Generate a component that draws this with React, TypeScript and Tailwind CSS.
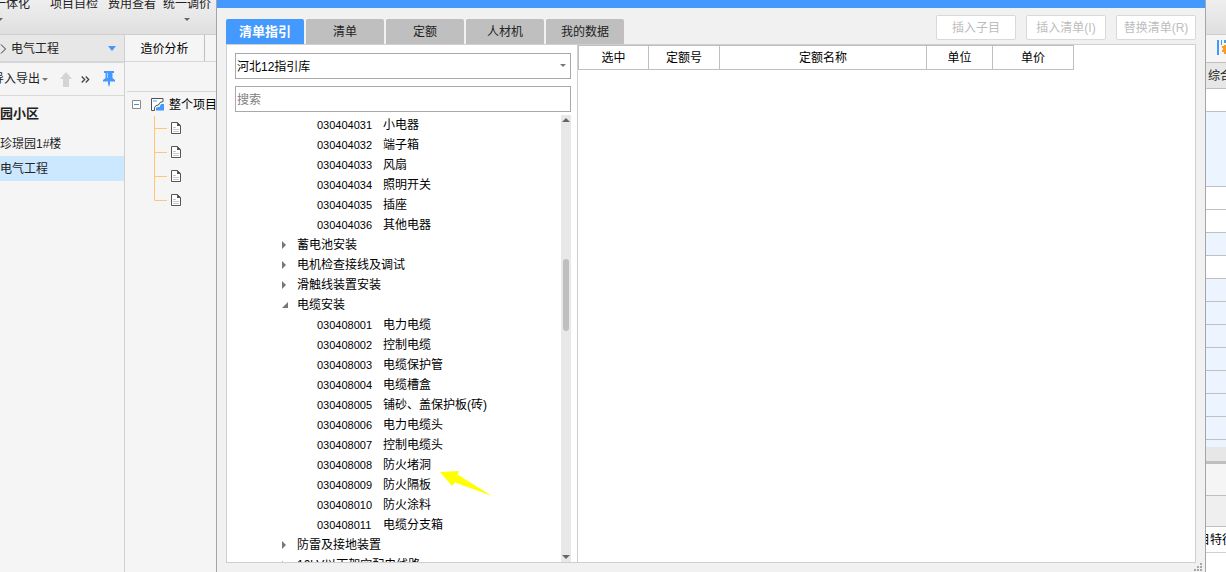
import { useState } from 'react'
import clsx from 'clsx'

type TreeItem = { code: string; name: string; marked?: boolean }
type TreeGroup = { name: string; open?: boolean; items?: TreeItem[] }

const TOP_ITEMS: TreeItem[] = [
  { code: '030404031', name: '小电器' },
  { code: '030404032', name: '端子箱' },
  { code: '030404033', name: '风扇' },
  { code: '030404034', name: '照明开关' },
  { code: '030404035', name: '插座' },
  { code: '030404036', name: '其他电器' },
]

const GROUPS: TreeGroup[] = [
  { name: '蓄电池安装' },
  { name: '电机检查接线及调试' },
  { name: '滑触线装置安装' },
  { name: '电缆安装', open: true, items: [
    { code: '030408001', name: '电力电缆' },
    { code: '030408002', name: '控制电缆' },
    { code: '030408003', name: '电缆保护管' },
    { code: '030408004', name: '电缆槽盒' },
    { code: '030408005', name: '铺砂、盖保护板(砖)' },
    { code: '030408006', name: '电力电缆头' },
    { code: '030408007', name: '控制电缆头' },
    { code: '030408008', name: '防火堵洞', marked: true },
    { code: '030408009', name: '防火隔板' },
    { code: '030408010', name: '防火涂料' },
    { code: '030408011', name: '电缆分支箱' },
  ]},
  { name: '防雷及接地装置' },
  { name: '10kV以下架空配电线路' },
]

const TABS = ['清单指引', '清单', '定额', '人材机', '我的数据']
const ACTIONS = ['插入子目', '插入清单(I)', '替换清单(R)']

const COLUMNS = [
  { label: '选中', width: 'w-[70px]' },
  { label: '定额号', width: 'w-[71px]' },
  { label: '定额名称', width: 'w-[207px]' },
  { label: '单位', width: 'w-[66px]' },
  { label: '单价', width: 'w-[81px]' },
]

const GRID_ROWS = [
  'h-[23px] bg-white',
  'h-[75px] bg-[#ecf4ff]',
  'h-[23px] bg-white',
  'h-[23px] bg-white',
  'h-[23px] bg-[#ecf4ff]',
  'h-[23px] bg-white',
  'h-[23px] bg-[#ecf4ff]',
  'h-[23px] bg-[#ecf4ff]',
  'h-[23px] bg-[#ecf4ff]',
  'h-[23px] bg-[#ecf4ff]',
  'h-[23px] bg-[#ecf4ff]',
  'h-[23px] bg-[#ecf4ff]',
  'h-[23px] bg-[#ecf4ff]',
]

function Caret({ className }: { className?: string }) {
  return (
    <svg width="6" height="3" viewBox="0 0 6 3" className={className} aria-hidden>
      <path d="M0 0h6L3 3z" fill="currentColor" />
    </svg>
  )
}

function PinIcon() {
  return (
    <svg width="12" height="16" viewBox="0 0 12 16" aria-hidden>
      <path d="M1 0h10v2H9.500v5L12 9v1.500H7V13l-1 3-1-3v-2.500H0V9l2.500-2V2H1z" fill="#4499ff" />
      <path d="M4 2h1v5H4z" fill="#a8d0ff" />
    </svg>
  )
}

function ProjectIcon() {
  return (
    <svg width="13" height="13" viewBox="0 0 13 13" aria-hidden>
      <path d="M.5.5h11.500v3L9 4.500 7.500 7 5 7.500 3.500 9.500V12.500H.5z" fill="#fff" stroke="#505050" />
      <path d="M2 2h4v2H2z" fill="#9fceff" />
      <path d="M5 12.500V9.500L8.500 9 10 6h3v6.500z" fill="#4499ff" />
    </svg>
  )
}

function FileIcon() {
  return (
    <svg width="10" height="12" viewBox="0 0 10 12" aria-hidden>
      <path d="M.5.5h6l3 3v8h-9z" fill="#fff" stroke="#555" />
      <path d="M6 0v4h4z" fill="#555" />
      <path d="M2 5.500h3M2 7.500h6M2 9.500h6" stroke="#c8c8c8" />
    </svg>
  )
}

function ItemRow({ item }: { item: TreeItem }) {
  return (
    <li className="relative flex h-5 items-center pl-[82px]">
      <span className="w-[66px] shrink-0 text-[11px]">{item.code}</span>
      <span>{item.name}</span>
      {item.marked && (
        <svg width="54" height="28" viewBox="0 0 54 28" className="absolute top-4 left-[204px] z-10" aria-hidden>
          <path d="M1 1l19-1-1.500 3.500L53 25 16 11.500 13 15z" fill="#ffff00" />
        </svg>
      )}
    </li>
  )
}

function ProjectSide() {
  return (
    <div className="flex w-[216px] shrink-0 flex-col overflow-hidden">
      <div className="flex h-[35px] shrink-0 items-end border-b border-[#cfcfcf] bg-gradient-to-b from-[#efefef] to-[#dfdfdf] pb-[13px] text-[#222]">
        <button className="flex w-[30px] flex-col items-end gap-[6px] whitespace-nowrap">
          <span className="leading-4">一体化</span>
          <Caret className="mr-[27px] text-[#666]" />
        </button>
        <button className="ml-5 flex flex-col gap-[6px]">
          <span className="leading-4">项目自检</span>
          <span className="h-[3px]" />
        </button>
        <button className="ml-[10px] flex flex-col gap-[6px]">
          <span className="leading-4">费用查看</span>
          <span className="h-[3px]" />
        </button>
        <button className="ml-[7px] flex flex-col items-center gap-[6px]">
          <span className="leading-4">统一调价</span>
          <Caret className="text-[#666]" />
        </button>
      </div>

      <div className="flex flex-1">
        <div className="w-[125px] shrink-0 border-r border-[#cfcfcf]">
          <button className="flex h-7 w-full items-center border-b-2 border-[#d6d6d6] bg-[#e7e7e7] pt-px pr-2 text-[#222]">
            <svg width="7" height="10" viewBox="0 0 7 10" aria-hidden>
              <path d="M1 .5L5.500 5 1 9.500" fill="none" stroke="#333" />
            </svg>
            <span className="ml-1 flex-1 text-left">电气工程</span>
            <svg width="8" height="5" viewBox="0 0 8 5" aria-hidden>
              <path d="M0 0h8L4 5z" fill="#4499ff" />
            </svg>
          </button>
          <div className="flex h-[33px] items-center border-b border-[#d9d9d9] text-[#222]">
            <button className="flex w-12 items-center justify-end gap-[2px] whitespace-nowrap">
              导入导出
              <Caret className="shrink-0 text-[#777]" />
            </button>
            <button className="ml-3" aria-label="上移">
              <svg width="12" height="15" viewBox="0 0 12 15" aria-hidden>
                <path d="M6 0l6 7H9v8H3V7H0z" fill="#d4d4d4" />
              </svg>
            </button>
            <button className="ml-[9px]" aria-label="更多">
              <svg width="9" height="7" viewBox="0 0 9 7" aria-hidden>
                <path d="M.7.500L3.700 3.500.7 6.500M4.700.500l3 3-3 3" fill="none" stroke="#444" strokeWidth="1.300" />
              </svg>
            </button>
            <button className="ml-[13px]" aria-label="固定">
              <PinIcon />
            </button>
          </div>
          <ul className="pt-1 text-[#222]">
            <li className="flex h-7 items-center text-[13px] font-bold">园小区</li>
            <li className="mt-1 flex h-6 items-center">珍璟园1#楼</li>
            <li className="flex h-[25px] items-center bg-[#cce8ff]">电气工程</li>
          </ul>
        </div>

        <div className="min-w-0 flex-1">
          <div className="flex h-[27px] border-b border-[#d6d6d6] text-black">
            <button className="w-20 border-r border-[#bfbfbf] pt-[2px]">造价分析</button>
          </div>
          <div className="ml-[2px] h-[30px] border-b border-[#d6d6d6]" />
          <div className="flex h-6 items-center pt-px pl-[7px] whitespace-nowrap text-black">
            <button aria-label="折叠">
              <svg width="9" height="9" viewBox="0 0 9 9" aria-hidden>
                <path d="M.5.5h8v8h-8z" fill="#fff" stroke="#8a8a8a" />
                <path d="M2 4.500h5" stroke="#2f9bd6" />
              </svg>
            </button>
            <span className="mr-[5px] ml-[10px]">
              <ProjectIcon />
            </span>
            整个项目
          </div>
          <ul className="ml-[29px]">
            {[0, 1, 2, 3].map((n) => (
              <li key={n} className="flex h-6 items-center">
                <svg width="13" height="24" viewBox="0 0 13 24" aria-hidden>
                  <path d={n === 3 ? 'M.5 0v12.500H13' : 'M.5 0v24M.5 12.500H13'} fill="none" stroke="#ffc774" />
                </svg>
                <span className="ml-1">
                  <FileIcon />
                </span>
              </li>
            ))}
          </ul>
        </div>
      </div>
    </div>
  )
}

function GuideTree() {
  return (
    <div className="mt-[3px] flex min-h-0 flex-1">
      <ul className="flex-1 overflow-hidden whitespace-nowrap">
        {TOP_ITEMS.map((item) => <ItemRow key={item.code} item={item} />)}
        {GROUPS.map((group) => (
          <li key={group.name}>
            <button className="flex h-5 items-center pl-[47px]" aria-expanded={!!group.open}>
              <svg width="6" height="8" viewBox="0 0 6 8" className="mr-[9px]" aria-hidden>
                <path d={group.open ? 'M6 1v6H0z' : 'M0 0l4 4-4 4z'} fill="#777" />
              </svg>
              {group.name}
            </button>
            {group.items && (
              <ul>
                {group.items.map((item) => <ItemRow key={item.code} item={item} />)}
              </ul>
            )}
          </li>
        ))}
      </ul>
      <div className="flex w-[10px] flex-col items-center bg-[#e8e8e8] py-[3px] text-[#666]">
        <svg width="8" height="4" viewBox="0 0 8 4" aria-hidden>
          <path d="M4 0l4 4H0z" fill="currentColor" />
        </svg>
        <div className="flex w-[6px] flex-1 flex-col">
          <div className="grow-[137]" />
          <div className="grow-[72] rounded-full bg-[#bfbfbf]" />
          <div className="grow-[223]" />
        </div>
        <svg width="8" height="4" viewBox="0 0 8 4" aria-hidden>
          <path d="M4 4L0 0h8z" fill="currentColor" />
        </svg>
      </div>
    </div>
  )
}

function GuideDialog() {
  const [tab, setTab] = useState(TABS[0])

  return (
    <section className="relative flex min-w-0 flex-1 flex-col border-x border-[#a6a6a6] bg-[#f1f1f1]">
      <div className="h-2 shrink-0 bg-[#4499ff]" />
      <div className="flex h-9 shrink-0 items-end justify-between px-[9px]">
        <div className="flex gap-[2px]" role="tablist">
          {TABS.map((label) => (
            <button
              key={label}
              role="tab"
              aria-selected={tab === label}
              onClick={() => setTab(label)}
              className={clsx(
                'h-[25px] w-[78px] rounded-t-xs pt-px',
                tab === label ? 'bg-[#4499ff] text-[13px] font-bold text-white' : 'bg-[#bfbfbf] text-[#222]',
              )}
            >
              {label}
            </button>
          ))}
        </div>
        <div className="mb-1 flex gap-[10px]">
          {ACTIONS.map((label) => (
            <button key={label} disabled className="h-[25px] w-20 rounded-xs border border-[#d9d9d9] bg-white pt-px text-[#bdbdbd]">
              {label}
            </button>
          ))}
        </div>
      </div>

      <div className="mx-[9px] mb-[9px] flex min-h-0 flex-1 border border-[#cfcfcf] bg-white">
        <div className="flex w-[351px] shrink-0 flex-col border-r border-[#cfcfcf] pt-2 pr-[6px] pl-2">
          <div className="relative">
            <select aria-label="指引库" className="block h-[26px] w-full appearance-none border border-[#a9a9a9] bg-white px-px pt-[2px]">
              <option>河北12指引库</option>
            </select>
            <Caret className="pointer-events-none absolute top-[11px] right-[5px] text-[#777]" />
          </div>
          <input
            type="text"
            aria-label="搜索"
            placeholder="搜索"
            className="mt-[7px] h-[26px] w-full border border-[#a9a9a9] px-px pt-[2px] placeholder:text-[#808080]"
          />
          <GuideTree />
        </div>
        <div className="min-w-0 flex-1">
          <table className="table-fixed border-separate border-spacing-0 border-l border-t border-[#bfbfbf]">
            <thead>
              <tr>
                {COLUMNS.map((col) => (
                  <th key={col.label} className={clsx('h-6 border-r border-b border-[#bfbfbf] p-0 font-normal', col.width)}>
                    {col.label}
                  </th>
                ))}
              </tr>
            </thead>
          </table>
        </div>
      </div>

      <svg width="9" height="9" viewBox="0 0 9 9" className="absolute right-[2px] bottom-0" aria-hidden>
        <path d="M6 0h2v2H6zM3 3h2v2H3zM6 3h2v2H6zM0 6h2v2H0zM3 6h2v2H3zM6 6h2v2H6z" fill="#a6a6a6" />
      </svg>
    </section>
  )
}

function GridSide() {
  return (
    <div className="flex w-5 shrink-0 flex-col overflow-hidden whitespace-nowrap">
      <div className="h-[35px] shrink-0 border-b border-[#cfcfcf] bg-gradient-to-b from-[#efefef] to-[#dfdfdf]" />
      <div className="h-7 shrink-0 border-b border-[#bfbfbf] bg-[#f5f5f5] pt-[5px] pl-[11px]">
        <svg width="9" height="15" viewBox="0 0 9 15" aria-hidden>
          <path d="M0 0h2v15H0zM4 0h1v5H4zM7 0h2v3H7z" fill="#4499ff" />
          <path d="M7 5h2v9H7v-2H5v-2h1V8H5V6h2z" fill="#ff9a1f" />
        </svg>
      </div>
      <div className="flex h-[26px] shrink-0 items-center border-b border-[#bfbfbf] bg-[#e7e7e7] pl-[2px] text-[#222]">综合</div>
      {GRID_ROWS.map((row, i) => (
        <div key={i} className={clsx('shrink-0 border-b border-[#bfbfbf]', row)} />
      ))}
      <div className="h-[7px] shrink-0 bg-[#ecf4ff]" />
      <div className="h-[17px] shrink-0 border-b-3 border-[#bfbfbf] bg-[#e7e7e7]" />
      <div className="h-8 shrink-0 border-b border-[#bfbfbf] bg-[#f5f5f5]" />
      <div className="h-[31px] shrink-0 border-b border-[#bfbfbf] bg-[#efefef]" />
      <div className="flex h-[26px] shrink-0 items-center justify-center border-b border-[#d0d0d0] bg-white">目特征</div>
      <div className="flex-1 bg-white" />
    </div>
  )
}

export default function App() {
  return (
    <div className="flex h-screen overflow-hidden bg-[#f5f5f5] font-['Liberation_Sans','Noto_Sans_CJK_SC',sans-serif] text-xs text-black">
      <ProjectSide />
      <GuideDialog />
      <GridSide />
    </div>
  )
}
